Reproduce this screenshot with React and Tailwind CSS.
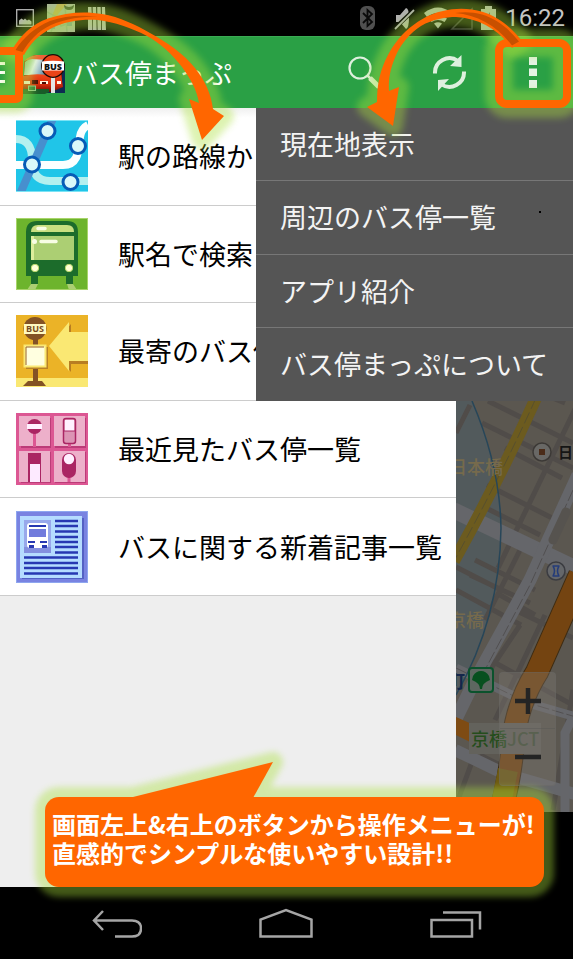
import React from "react";

function PictureIcon() {
  return (
    <svg width="18" height="18" viewBox="0 0 18 18" aria-hidden="true">
      <rect x="0.7" y="0.7" width="16.6" height="16.6" fill="none" stroke="#b4b4b4" strokeWidth="1.3" />
      <path d="M3 15.500v-4l2.500-2 2 1.500L9 9.500l2 2 2-1 2.500 2v3z" fill="#b4b4b4" />
    </svg>
  );
}

function MapThumb() {
  return (
    <svg width="28" height="28" viewBox="0 0 28 28" aria-hidden="true">
      <rect width="28" height="28" fill="#a9b49c" />
      <path d="M10 0h10l-9 10-3 10-3-8z" fill="#c1ae5c" />
      <path d="M0 8l8 4 6 10 14-5M4 28l6-16M18 2l2 26" stroke="#94ab8a" strokeWidth="1.500" fill="none" />
      <path d="M17 1q5 4 10 0q0 5-5 5t-5-5" fill="#3f4f34" />
      <path d="M3 20h5v5H3zM20 18h5v4h-5z" fill="#7f9d92" />
    </svg>
  );
}

function BarsIcon() {
  return (
    <svg width="18" height="23" viewBox="0 0 18 23" fill="#b4b4b4" aria-hidden="true">
      <path d="M0 0h3.500l1 23H0zM4.600 0h3.500l.6 23H5zM9.200 0h3.500l.6 23H9.500zM13.800 0H17l1 23h-4z" />
    </svg>
  );
}

function StatusBar() {
  return (
    <header className="flex h-9 shrink-0 items-center justify-between bg-black pl-4 pr-2">
      <div className="flex items-center gap-[13px]">
        <PictureIcon />
        <MapThumb />
        <BarsIcon />
      </div>
      <div className="flex items-center">
        <svg width="142" height="26" viewBox="0 0 142 26" aria-hidden="true">
          <rect x="1" y="1" width="15" height="24" rx="6" fill="#505050" />
          <path d="M4 8l9 9-4.500 4V5L13 9l-9 9" fill="none" stroke="#0a0a0a" strokeWidth="1.800" />
          <path d="M37 10h4l6-7q3 0 3 10t-3 11l-6-7h-4z" fill="#b0b0b0" />
          <path d="M36 23L55 5" stroke="#000" strokeWidth="4" />
          <path d="M36 24L55 5" stroke="#b0b0b0" strokeWidth="1.800" />
          <path d="M65 8q14-11 28 0l-3 4q-11-8-22 0z" fill="#b0b0b0" />
          <path d="M70 13.500q9-6 18 0l-2.500 3.500q-6.500-4-13 0z" fill="#b0b0b0" />
          <path d="M75 18.500q4-2.500 8 0l-4 5z" fill="#b0b0b0" />
          <path d="M93 24L113 4v20z" fill="none" stroke="#3a3a3a" strokeWidth="1.500" />
          <path d="M122 4h4V1h7v3h4v21h-15z" fill="#b0b0b0" />
          <path d="M131 7l-5 8h3l-1 6 5-8h-3z" fill="#3a3a3a" />
        </svg>
        <time className="ml-1 font-[Roboto,sans-serif] text-2xl leading-9 text-[#c4c4c4]">16:22</time>
      </div>
    </header>
  );
}

function AppLogo() {
  return (
    <svg width="42" height="42" viewBox="0 0 42 42" aria-hidden="true">
      <defs>
        <linearGradient id="busBody" x1="0" y1="0" x2="0" y2="1">
          <stop offset="0" stopColor="#f4471c" />
          <stop offset="0.6" stopColor="#d32a0c" />
          <stop offset="1" stopColor="#6e0a03" />
        </linearGradient>
        <linearGradient id="busGlass" x1="0" y1="0" x2="1" y2="0.3">
          <stop offset="0" stopColor="#6fae9e" />
          <stop offset="0.5" stopColor="#e8f3f0" />
          <stop offset="1" stopColor="#5f8ba4" />
        </linearGradient>
      </defs>
      <path d="M22 12h20v29H22z" fill="#0e2b52" />
      <path d="M1 9L11 3h18l10 6v25l-10 6-28-3z" fill="#7d1208" />
      <path d="M2 10L9 5h17l-2 5-1 13H1z" fill="url(#busGlass)" />
      <path d="M1 9Q6 4 13 3h17l-6 5-15-1z" fill="#ee6036" />
      <path d="M0 24q12-3 24-1l14-1 2 13-12 5L0 37z" fill="url(#busBody)" />
      <path d="M1 29h6v3H1zM17 29h8v3h-8zM34 29h4v3h-4z" fill="#fff3dc" />
      <path d="M9 28h6v4H9zM19 30h4v2h-4z" fill="#4c0904" />
      <path d="M0 37h26v3l-4 2H0z" fill="#185c28" />
      <rect x="5.500" y="34" width="7" height="4.500" fill="#2c7b3b" stroke="#8ec78a" />
      <rect x="28" y="24" width="4" height="17" fill="#e4e4e4" />
      <circle cx="30" cy="14" r="11.300" fill="#ea4318" stroke="#1c0b06" strokeWidth="1.200" />
      <path d="M19 9.500q11-1.500 22 0v9H19z" fill="#fff" />
      <text x="30" y="17.500" textAnchor="middle" fontFamily="Open Sans, sans-serif" fontSize="9" fontWeight="800" fill="#111">BUS</text>
    </svg>
  );
}

function ActionBar() {
  return (
    <div className="flex h-[72px] shrink-0 items-center border-t border-[#3bab53] bg-[#2aa045] text-white">
      <button aria-label="メニュー" className="flex h-full w-[23px] shrink-0 items-center">
        <svg width="5" height="22" viewBox="0 0 5 22" fill="#fff" aria-hidden="true">
          <path d="M0 0h5v3H0zM0 9h5v3H0zM0 18h5v3H0z" />
        </svg>
      </button>
      <AppLogo />
      <h1 className="ml-1.5 flex-1 whitespace-nowrap text-[27px] leading-9">バス停まっぷ</h1>
      <button aria-label="検索" className="flex h-full w-[85px] items-center justify-center">
        <svg width="34" height="34" viewBox="0 0 34 34" fill="none" stroke="#def0de" aria-hidden="true">
          <circle cx="12" cy="12" r="10.500" strokeWidth="2.200" />
          <path d="M19.500 19.500l4 4" strokeWidth="2.500" />
          <path d="M22 22l9 9" strokeWidth="5" />
        </svg>
      </button>
      <button aria-label="更新" className="flex h-full w-[85px] items-center justify-center">
        <svg width="36" height="36" viewBox="0 0 36 36" aria-hidden="true">
          <path d="M3 18.500A14.500 14.500 0 0 1 26 6" fill="none" stroke="#def0de" strokeWidth="4" />
          <path d="M32 16.500A14.500 14.500 0 0 1 9 29" fill="none" stroke="#def0de" strokeWidth="4" />
          <path d="M29.500 0v12L18 11zM6 36V25l11-1z" fill="#def0de" />
        </svg>
      </button>
      <button aria-label="その他のオプション" className="flex h-full w-[81px] items-center justify-center">
        <svg width="8" height="31" viewBox="0 0 8 31" fill="#e4f3e4" aria-hidden="true">
          <path d="M0 0h8v8H0zM0 11.500h8v7.500H0zM0 23h8v8H0z" />
        </svg>
      </button>
    </div>
  );
}

function RouteIcon() {
  return (
    <svg className="size-[72px] shrink-0" viewBox="0 0 72 72" aria-hidden="true">
      <rect width="72" height="72" fill="#20c5e8" />
      <g fill="none" strokeWidth="8">
        <path d="M0 19c11 0 16 8 16 20 0 14 5 22 18 22h38" stroke="#b3f0ef" />
        <path d="M0 45h47c18 0 15-20 17-28 1-7 4-10 8-12" stroke="#fbffff" />
        <path d="M4 74L38-4" stroke="#478fce" />
      </g>
      <g fill="#daf8f9" stroke="#075bb6" strokeWidth="3">
        <circle cx="31.500" cy="11" r="7.500" />
        <circle cx="62" cy="26" r="7.500" />
        <circle cx="16" cy="44.500" r="7.500" />
        <circle cx="54.500" cy="62" r="7.500" />
      </g>
      <path d="M0 .5h72M0 71.500h72" stroke="#7be3f5" />
    </svg>
  );
}

function TrainIcon() {
  return (
    <svg className="size-[72px] shrink-0" viewBox="0 0 72 72" aria-hidden="true">
      <rect width="72" height="72" fill="#6db42d" />
      <path d="M10 58V14Q10 3 21 3h30q11 0 11 11v44h-5v8h-7v-8H22v8h-7v-8z" fill="#1c6c2b" />
      <path d="M15 14q0-7 7-7h29q7 0 7 7z" fill="#c8df80" />
      <path d="M15 18h43v24H15z" fill="#accf73" />
      <path d="M15 18h3v24h-3z" fill="#dced9b" />
      <path d="M22 10.500h7M25 23.500h15" stroke="#f8fde5" strokeWidth="3.500" strokeLinecap="round" />
      <circle cx="18.500" cy="23.500" r="2.500" fill="#f8fde5" />
      <circle cx="19" cy="50" r="3.700" fill="#ffffd7" stroke="#bada6b" />
      <circle cx="53" cy="50" r="3.700" fill="#ffffd7" stroke="#bada6b" />
      <path d="M15 66h7l-3 6h-8zM51 66h6l4 6h-8z" fill="#accf73" />
      <rect x=".5" y=".5" width="71" height="71" fill="none" stroke="#a8d46a" />
    </svg>
  );
}

function NearStopIcon() {
  return (
    <svg className="size-[72px] shrink-0" viewBox="0 0 72 72" aria-hidden="true">
      <rect width="72" height="72" fill="#ebb327" />
      <path d="M0 63h72v9H0z" fill="#fae873" />
      <path d="M35 33L55 9v12h19v28H55v8z" fill="#b87d22" />
      <path d="M33 31L53 7v10h21v29H53v10z" fill="#fae873" />
      <circle cx="19" cy="13.500" r="11.500" fill="#835225" />
      <path d="M8 9h22v10H8z" fill="#fff9c0" />
      <text x="19" y="17" textAnchor="middle" fontFamily="Open Sans, sans-serif" fontSize="9" fontWeight="700" fill="#794b22">BUS</text>
      <path d="M17 24h5v42h-5z" fill="#835225" />
      <path d="M12 66h14l4 5H7z" fill="#835225" />
      <path d="M10 32h22v22H10z" fill="#b98227" />
      <rect x="8.500" y="30.500" width="21" height="21" fill="#ffffe0" stroke="#fae873" strokeWidth="2" />
      <path d="M10 50V32h18" fill="none" stroke="#986322" />
    </svg>
  );
}

function RecentStopsIcon() {
  return (
    <svg className="size-[72px] shrink-0" viewBox="0 0 72 72" aria-hidden="true">
      <rect width="72" height="72" fill="#dc5793" />
      <path d="M5 5h30v30H5zM39 5h31v30H39zM5 39h30v31H5zM39 39h31v31H39z" fill="#bc3b78" />
      <path d="M3 3h31v30H3zM38 3h31v30H38zM3 38h31v31H3zM38 38h31v31H38z" fill="#edb0ca" />
      <path d="M18.500 20v14M53.500 29v5M53 62v7" stroke="#dc5793" strokeWidth="3" />
      <circle cx="18.500" cy="13.500" r="7.500" fill="#aa2563" />
      <path d="M11 11h15v5H11z" fill="#fff0ff" />
      <rect x="47.500" y="5.500" width="12" height="25" rx="2.500" fill="#dc94b4" stroke="#aa2563" strokeWidth="1.500" />
      <path d="M49 7h9v11h-9z" fill="#fff0ff" />
      <path d="M48 18h11" stroke="#aa2563" />
      <path d="M12 40h13v29H12z" fill="#aa2563" />
      <path d="M14 51h10v18H14z" fill="#fdeaff" />
      <rect x="46" y="40" width="14" height="25" rx="7" fill="#aa2563" />
      <circle cx="53" cy="46" r="5.200" fill="#fff0ff" />
    </svg>
  );
}

function NewsIcon() {
  return (
    <svg className="size-[72px] shrink-0" viewBox="0 0 72 72" aria-hidden="true">
      <rect width="72" height="72" fill="#7983e1" />
      <path d="M6 7h62v61H6z" fill="#5361c4" />
      <path d="M4 5h62v62H4z" fill="#b5dcff" />
      <path d="M8 9h27v33H8z" fill="#98a8eb" />
      <path d="M8 36h27v6H8z" fill="#8490df" />
      <rect x="11" y="12" width="21" height="25" rx="3" fill="#fff" />
      <path d="M13 14h17v2H13z" fill="#2738b2" />
      <path d="M13 18h17v8H13z" fill="#717bdc" />
      <path d="M12 30h7v2h-7zM24 30h7v2h-7zM13 34h5v3h-5zM26 34h5v3h-5z" fill="#2738b2" />
      <path d="M39 10h23M39 15h23M39 20.500h23M39 26h23M39 31h23M39 36h23M39 41.500h23M8 46.500h54M8 52h54M8 57h54M8 62.500h54" stroke="#2738b2" strokeWidth="2.600" />
      <rect x=".5" y=".5" width="71" height="71" fill="none" stroke="#8ea6ef" />
    </svg>
  );
}

const drawerItems = [
  { Icon: RouteIcon, label: "駅の路線か" },
  { Icon: TrainIcon, label: "駅名で検索" },
  { Icon: NearStopIcon, label: "最寄のバス停" },
  { Icon: RecentStopsIcon, label: "最近見たバス停一覧" },
  { Icon: NewsIcon, label: "バスに関する新着記事一覧" },
];

function Drawer() {
  return (
    <nav className="w-[456px] shrink-0 bg-[#eeeeee]">
      <ul className="grid h-[488px] grid-rows-5">
        {drawerItems.map(({ Icon, label }) => (
          <li key={label} className="border-b border-[#cccccc] bg-white first:bg-linear-to-b first:from-[#f0f0f0] first:to-white first:to-10%">
            <a href="#" className="flex h-full items-center gap-[30px] overflow-hidden pl-4">
              <Icon />
              <span className="whitespace-nowrap text-[27px] leading-9 text-black">{label}</span>
            </a>
          </li>
        ))}
      </ul>
    </nav>
  );
}

function MapDrawing() {
  return (
    <svg className="block h-full w-full" viewBox="456 108 117 704" preserveAspectRatio="xMinYMin slice" fontFamily="Noto Sans CJK JP, sans-serif" aria-hidden="true">
      <rect x="456" y="108" width="600" height="704" fill="#5b5750" />
      <path d="M456 401h16q28 65 29 127-1 90-45 167z" fill="#525a5c" />
      <g stroke="#504c49" strokeWidth="5" fill="none">
        <path d="M488 401l85 42M482 423l91 45M578 403l-80 165M505 448l57 30M487 485l75 38M480 505l60 30M470 405l-14 28M545 395l20 8" />
        <path d="M475 560l60 30M470 575l60 28M456 567l45 23M456 590l65 35M520 550l-35 70" />
        <path d="M515 610l58 28M520 625l-40 60M490 660l83 45M545 615l-50 105M480 755l70 35M480 740l-22 60M573 690l-20 120M500 595l35 20" />
      </g>
      <g fill="none" stroke="#65666a">
        <path d="M453 510l122 58" strokeWidth="16" />
        <path d="M578 475L530 580l-55 100-22 45" strokeWidth="13" />
        <path d="M456 668l72 35 48 14" strokeWidth="9" />
        <path d="M455 750l50 24 70 20" strokeWidth="12" />
        <path d="M575 713l-10 20v80" strokeWidth="9" />
      </g>
      <path d="M573 490L530 585l-52 98M456 668l72 35 48 14" stroke="#514f50" fill="none" strokeDasharray="12 3" />
      <path d="M553 540l13-28" stroke="#56534f" strokeWidth="9" strokeLinecap="round" />
      <path d="M536 398Q500 478 454 561" fill="none" stroke="#6c5b1f" strokeWidth="12" />
      <path d="M536 398Q500 478 454 561" fill="none" stroke="#574f2e" strokeDasharray="12 4" />
      <path d="M472 401q28 65 29 127-1 90-45 167" fill="none" stroke="#274659" strokeWidth="1.500" />
      <path d="M580 575l-43 97q-20 32-24 70-3 40-14 75" fill="none" stroke="#3e2c13" strokeWidth="24" />
      <path d="M580 575l-43 97q-20 32-24 70-3 40-14 75" fill="none" stroke="#744411" strokeWidth="22" />
      <path d="M508 770l-9 44" stroke="#6e5a12" strokeWidth="20" />
      <path d="M454 716l20 9v19l-20-10z" fill="#7e4b13" />
      <g fontSize="18" fontWeight="500" fill="#766a4c">
        <text x="449" y="474">日本橋</text>
        <text x="448" y="627">京橋</text>
      </g>
      <circle cx="542" cy="452" r="9" fill="#696865" stroke="#3c3936" strokeWidth="1.500" />
      <path d="M539 449h6v6h-6z" fill="#4b2c19" />
      <text x="558" y="458" fontSize="15" fontWeight="700" fill="#151515">日</text>
      <circle cx="556" cy="571" r="9" fill="#65676a" stroke="#3b3c41" strokeWidth="1.500" />
      <path d="M552.500 566h7M552.500 576h7M553 566q3 5 0 10M559 566q-3 5 0 10" stroke="#243c7a" strokeWidth="1.500" fill="none" />
      <text x="447" y="688" fontSize="18" fontWeight="700" fill="#14264a">町</text>
      <rect x="469" y="668" width="24" height="24" rx="3" fill="#5d6760" stroke="#0b522c" strokeWidth="2" />
      <path d="M480 689q0-6-8-9l1-4q3-5 8-5t8 5l1 4q-8 3-8 9z" fill="#07501f" />
      <path d="M469 723h72v31h-72z" fill="#63625c" />
      <text x="471" y="746" fontSize="18" fontWeight="500" fill="#254d1c">京橋</text>
      <text x="507" y="746" fontSize="18" fontWeight="500" fill="#44533c">JCT</text>
    </svg>
  );
}

function MapPane() {
  return (
    <section aria-label="地図" className="relative h-[704px] min-w-0 flex-1 overflow-hidden">
      <MapDrawing />
      <div className="absolute bottom-[26px] right-[17px] grid h-[114px] w-[57px] grid-rows-2 rounded-sm border border-[#67676466] bg-[#85807852]">
        <button aria-label="拡大" className="flex items-center justify-center border-b border-[#55555566]">
          <svg width="26" height="26" viewBox="0 0 26 26" aria-hidden="true">
            <path d="M0 13h26M13 0v26" stroke="#242424" strokeWidth="4.500" />
          </svg>
        </button>
        <button aria-label="縮小" className="flex items-center justify-center">
          <svg width="26" height="6" viewBox="0 0 26 6" aria-hidden="true">
            <path d="M0 3h26" stroke="#242424" strokeWidth="4.500" />
          </svg>
        </button>
      </div>
    </section>
  );
}

const menuItems = ["現在地表示", "周辺のバス停一覧", "アプリ紹介", "バス停まっぷについて"];

function OverflowMenu() {
  return (
    <div className="absolute right-0 top-0 w-[317px] bg-[#555555]">
      <ul className="grid h-[293px] grid-rows-4 divide-y divide-[#777777]">
        {menuItems.map((label) => (
          <li key={label}>
            <button className="flex h-full w-full items-center whitespace-nowrap pl-6 text-[27px] leading-9 text-[#f3f3f3]">
              {label}
            </button>
          </li>
        ))}
      </ul>
      <span className="absolute right-8 top-[103px] size-0.5 bg-black" />
    </div>
  );
}

function Callout() {
  return (
    <aside className="absolute inset-x-[29px] bottom-0 left-[45px] h-[90px]">
      <svg className="absolute -left-5 -top-[55px] h-[165px] w-[calc(100%+40px)] overflow-visible" aria-hidden="true">
        <defs>
          <filter id="calloutGlow" x="-10%" y="-20%" width="120%" height="140%">
            <feGaussianBlur stdDeviation="3" />
          </filter>
        </defs>
        <g opacity="0.4" filter="url(#calloutGlow)" fill="#aae13c" stroke="#aae13c" strokeWidth="20" strokeLinejoin="round">
          <path d="M104 56L248 20L228 56z" />
          <rect x="20" y="55" width="499" height="90" rx="14" />
        </g>
        <path d="M104 56L248 20L228 56z" fill="#ff6600" />
      </svg>
      <p className="relative h-full whitespace-nowrap rounded-[14px] bg-[#ff6600] pl-[7px] pt-3 text-2xl font-bold leading-[29px] text-white">
        画面左上&amp;右上のボタンから操作メニューが!
        <br />
        直感的でシンプルな使いやすい設計!!
      </p>
    </aside>
  );
}

function NavigationBar() {
  return (
    <footer className="flex h-[72px] shrink-0 items-center justify-center gap-[117px] bg-black">
      <button aria-label="戻る">
        <svg width="50" height="30" viewBox="0 0 50 30" fill="none" stroke="#a5a5a5" strokeWidth="2.500" aria-hidden="true">
          <path d="M11 3L2 12.500 11 22M2 12.500h38q9 0 9 8t-9 8H23" />
        </svg>
      </button>
      <button aria-label="ホーム">
        <svg width="54" height="30" viewBox="0 0 54 30" fill="none" stroke="#a5a5a5" strokeWidth="2.500" aria-hidden="true">
          <path d="M1.500 28.500V11.500L27 2l25.500 9.500v17z" />
        </svg>
      </button>
      <button aria-label="最近使ったアプリ">
        <svg width="52" height="30" viewBox="0 0 52 30" fill="none" stroke="#a5a5a5" strokeWidth="2.500" aria-hidden="true">
          <path d="M1.500 12H42v16.500H1.500zM13 4.500h37v17" />
        </svg>
      </button>
    </footer>
  );
}

const leftArrow =
  "M12 50C20 36 32 24 48 18.500C66 12 86 11 102 14C120 17 136 25 150 33C168 43 184 54 195 68C206 82 211 94 213 109L224 116L202 140L189 99L199 103C197 90 190 78 182 67C172 54 160 43 147 36C132 28 114 22 98 20C82 19 66 21 52 28C38 35 30 44 24 55Z";
const rightArrow =
  "M522 41C510 26 498 17 483 12C469 8 456 8 443 11C428 14 416 22 405 32C396 41 391 49 388 55C380 70 377 84 377 102L367 107L393 126L399 87L389 91C388 78 391 66 397 53C402 43 410 33 421 26C433 19 446 17 456 17C478 18 498 29 512 48Z";

function Pointers() {
  return (
    <>
      <svg className="pointer-events-none absolute left-0 top-0" width="260" height="170" viewBox="0 0 260 170" aria-hidden="true">
        <defs>
          <filter id="pointerGlow" filterUnits="userSpaceOnUse" x="-80" y="-30" width="700" height="230">
            <feGaussianBlur stdDeviation="3.500" />
          </filter>
        </defs>
        <rect x="-40" y="51" width="59" height="48" rx="4" opacity="0.4" filter="url(#pointerGlow)" fill="none" stroke="#aae13c" strokeWidth="28" />
        <path opacity="0.4" filter="url(#pointerGlow)" d={leftArrow} fill="#aae13c" stroke="#aae13c" strokeWidth="20" strokeLinejoin="round" />
        <rect x="-40" y="51" width="59" height="48" rx="3" fill="none" stroke="#ff6600" strokeWidth="8" />
        <path d={leftArrow} fill="#ff6600" />
        <path d="M15.500 50C23 38 35 27 50 21C64 16 80 14.500 98 16.500C82 16.500 66 18.500 51 25C38 31 29 41 22.500 52Z" fill="#c85000" />
      </svg>
      <svg className="pointer-events-none absolute right-0 top-0" width="233" height="150" viewBox="340 0 233 150" aria-hidden="true">
        <rect x="499" y="43" width="68" height="61" rx="8" opacity="0.4" filter="url(#pointerGlow)" fill="none" stroke="#aae13c" strokeWidth="28" />
        <path opacity="0.4" filter="url(#pointerGlow)" d={rightArrow} fill="#aae13c" stroke="#aae13c" strokeWidth="20" strokeLinejoin="round" />
        <rect x="499" y="43" width="68" height="61" rx="8" fill="none" stroke="#ff6600" strokeWidth="8" />
        <path d={rightArrow} fill="#ff6600" />
        <path d="M519 41.500C508 28 497 19 482 14.500C473 12 464 11.500 455 13C478 15 497 26 512 45.500Z" fill="#c85000" />
      </svg>
    </>
  );
}

export default function App() {
  return (
    <div className="relative flex min-h-screen flex-col overflow-hidden bg-black font-['Noto_Sans_CJK_JP',sans-serif]">
      <StatusBar />
      <ActionBar />
      <main className="relative flex min-h-[779px] flex-1">
        <Drawer />
        <MapPane />
        <OverflowMenu />
        <Callout />
      </main>
      <NavigationBar />
      <Pointers />
    </div>
  );
}
